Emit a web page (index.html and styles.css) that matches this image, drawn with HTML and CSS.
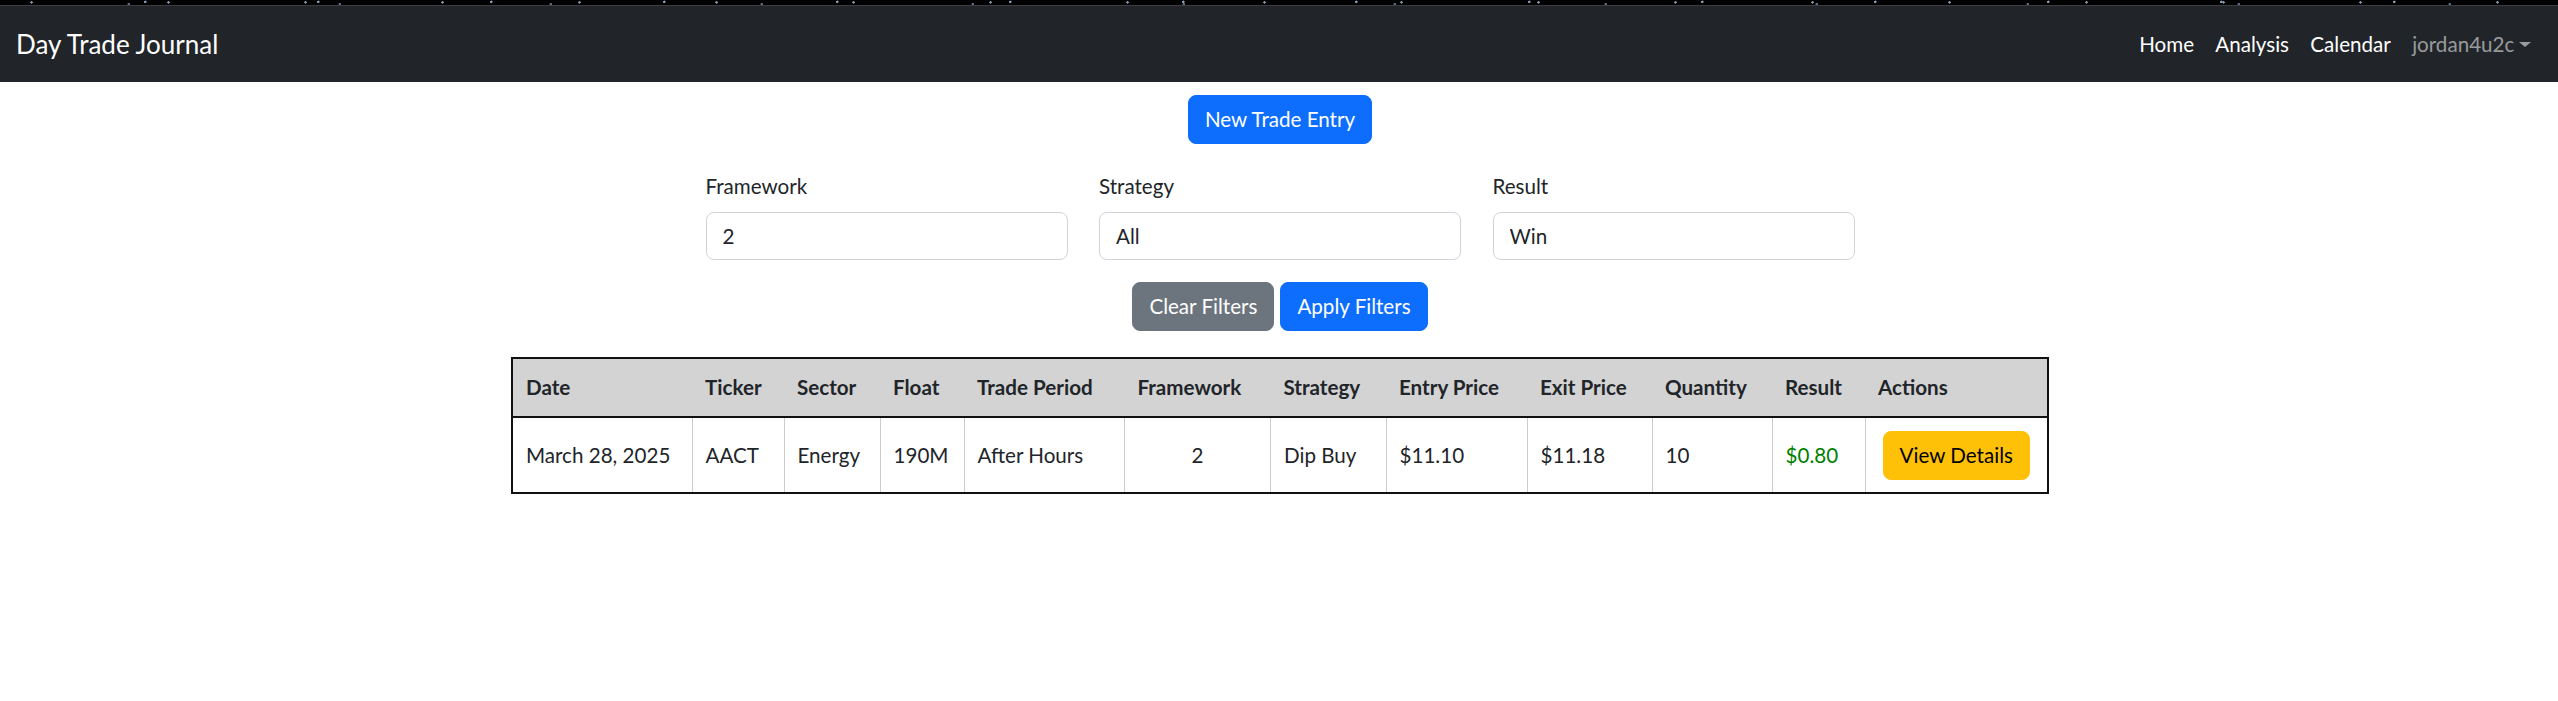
FILE: index.html
```html
<!DOCTYPE html>
<html lang="en">
<head>
<meta charset="utf-8">
<title>Day Trade Journal</title>
<link rel="stylesheet" href="styles.css">
</head>
<body>
<div class="top-strip"></div>
<nav class="navbar">
  <a class="brand" href="#">Day Trade Journal</a>
  <ul class="nav">
    <li><a class="nav-link" href="#">Home</a></li>
    <li><a class="nav-link" href="#">Analysis</a></li>
    <li><a class="nav-link" href="#">Calendar</a></li>
    <li><a class="nav-link user" href="#">jordan4u2c<span class="caret"></span></a></li>
  </ul>
</nav>
<main class="main">
  <div class="top-actions">
    <button class="btn btn-primary" type="button">New Trade Entry</button>
  </div>
  <form class="filters">
    <div class="filter-row">
      <div class="field">
        <label class="form-label">Framework</label>
        <input class="form-control" type="text" value="2">
      </div>
      <div class="field">
        <label class="form-label">Strategy</label>
        <input class="form-control" type="text" value="All">
      </div>
      <div class="field">
        <label class="form-label">Result</label>
        <input class="form-control" type="text" value="Win">
      </div>
    </div>
    <div class="filter-buttons">
      <button class="btn btn-secondary" type="button">Clear Filters</button>
      <button class="btn btn-primary" type="button">Apply Filters</button>
    </div>
  </form>
  <table class="trades">
    <colgroup>
      <col class="c-date"><col class="c-ticker"><col class="c-sector"><col class="c-float">
      <col class="c-period"><col class="c-framework"><col class="c-strategy"><col class="c-entry">
      <col class="c-exit"><col class="c-qty"><col class="c-result"><col class="c-actions">
    </colgroup>
    <thead>
      <tr>
        <th>Date</th><th>Ticker</th><th>Sector</th><th>Float</th><th>Trade Period</th><th>Framework</th>
        <th>Strategy</th><th>Entry Price</th><th>Exit Price</th><th>Quantity</th><th>Result</th><th>Actions</th>
      </tr>
    </thead>
    <tbody>
      <tr>
        <td>March 28, 2025</td><td>AACT</td><td>Energy</td><td>190M</td><td>After Hours</td>
        <td class="center">2</td><td>Dip Buy</td><td>$11.10</td><td>$11.18</td><td>10</td>
        <td class="win">$0.80</td>
        <td class="center"><button class="btn btn-warning" type="button">View Details</button></td>
      </tr>
    </tbody>
  </table>
</main>
</body>
</html>
```

FILE: styles.css
```css
* { box-sizing: border-box; }
html, body { margin: 0; }
body {
  font-family: "Lato", "Segoe UI", sans-serif;
  font-size: 20.6px;
  line-height: 1.5;
  color: #212529;
  background: #fff;
}
.top-strip {
  height: 6px;
  background-color: #000;
  background-image:
    radial-gradient(circle at 23% 40%, #7f93a8 0 1px, transparent 1.5px),
    radial-gradient(circle at 61% 70%, #5c6f86 0 1px, transparent 1.5px),
    radial-gradient(circle at 84% 30%, #8aa0b8 0 1px, transparent 1.5px);
  background-size: 137px 6px, 211px 6px, 173px 6px;
  border-bottom: 1px solid #3c3d3f;
}
.navbar {
  height: 76px;
  background: #212529;
  display: flex;
  align-items: center;
  justify-content: space-between;
  padding: 0 16px;
}
.brand {
  color: #fff;
  font-size: 26px;
  text-decoration: none;
}
.nav {
  display: flex;
  list-style: none;
  margin: 0;
  padding: 0;
}
.nav-link {
  display: flex;
  align-items: center;
  padding: 0 10.67px;
  color: #fff;
  text-decoration: none;
}
.nav-link.user { color: rgba(255, 255, 255, 0.55); }
.caret {
  display: inline-block;
  margin-left: 5px;
  margin-top: 2px;
  border-top: 5.5px solid;
  border-left: 6px solid transparent;
  border-right: 6px solid transparent;
}
.main { padding-left: 2px; }
.top-actions {
  display: flex;
  justify-content: center;
  margin-top: 13px;
}
.btn {
  display: inline-flex;
  align-items: center;
  justify-content: center;
  height: 49px;
  padding: 0 16px;
  border: 1px solid transparent;
  border-radius: 8px;
  font: inherit;
  color: #fff;
}
.btn-primary { background: #0d6efd; border-color: #0d6efd; }
.btn-secondary { background: #6c757d; border-color: #6c757d; }
.btn-warning { background: #ffc107; border-color: #ffc107; color: #000; }
.filters {
  width: 1149px;
  margin: 26px auto 0;
}
.filter-row {
  display: grid;
  grid-template-columns: repeat(3, 1fr);
  column-gap: 31.5px;
}
.form-label {
  display: block;
  line-height: 32px;
  margin-bottom: 10px;
}
.form-control {
  display: block;
  width: 100%;
  height: 48px;
  padding: 0 16px;
  border: 1px solid #ced4da;
  border-radius: 8px;
  font: inherit;
  color: #212529;
  background: #fff;
}
.filter-buttons {
  display: flex;
  justify-content: center;
  gap: 6px;
  margin-top: 22px;
}
.trades {
  margin: 26px auto 0;
  border-collapse: collapse;
  table-layout: fixed;
  width: 1536px;
  border: 2px solid #111;
}
.c-date { width: 180px; }
.c-ticker { width: 92px; }
.c-sector { width: 96px; }
.c-float { width: 84px; }
.c-period { width: 160.5px; }
.c-framework { width: 146px; }
.c-strategy { width: 115.5px; }
.c-entry { width: 141px; }
.c-exit { width: 125px; }
.c-qty { width: 120px; }
.c-result { width: 93px; }
.c-actions { width: 183px; }
.trades th {
  background: #d3d3d3;
  height: 59px;
  padding: 0 13px;
  text-align: left;
  font-weight: 700;
  white-space: nowrap;
  border-bottom: 2px solid #111;
}
.trades td {
  height: 76px;
  padding: 0 13px;
  white-space: nowrap;
  border-left: 1px solid #ccc;
}
.trades td:first-child { border-left: 0; }
.trades .center { text-align: center; }
.trades .win { color: #008000; }
```
